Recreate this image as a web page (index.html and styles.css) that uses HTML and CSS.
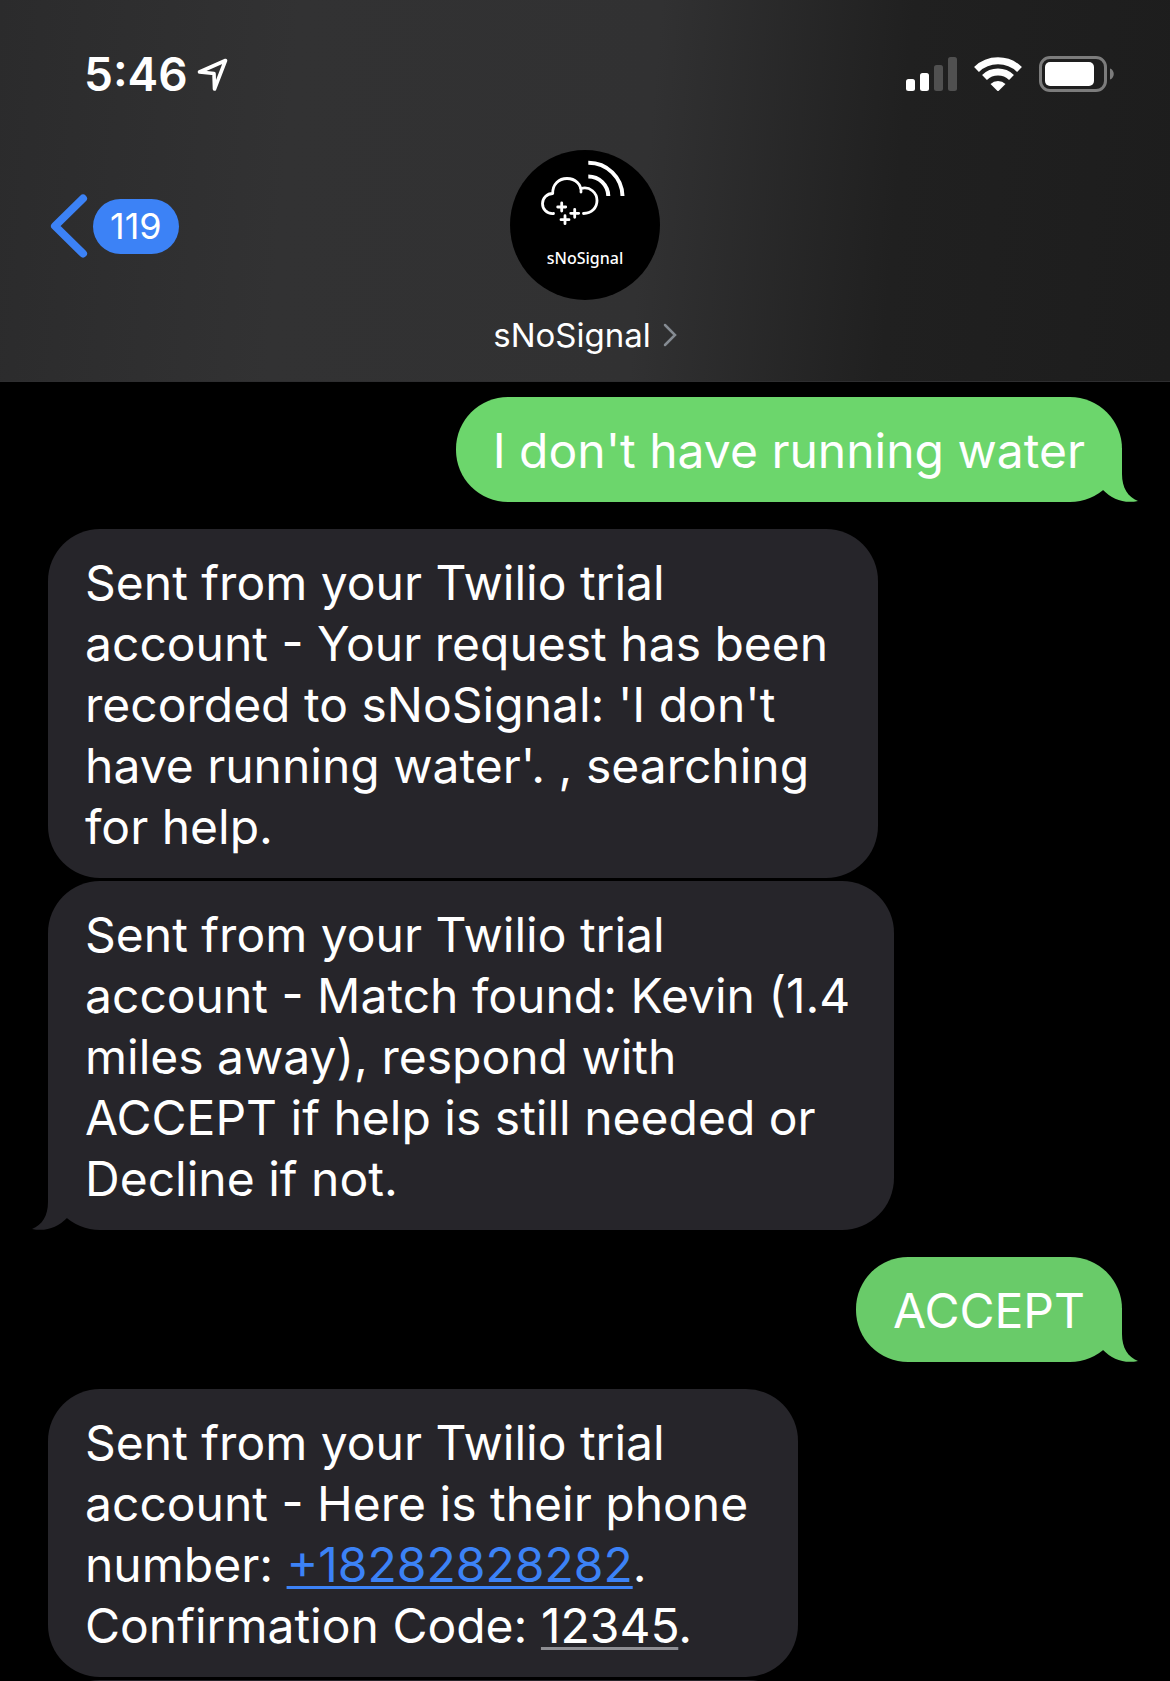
FILE: index.html
```html
<!DOCTYPE html>
<html lang="en">
<head>
    <meta charset="UTF-8">
    <meta name="viewport" content="width=device-width, initial-scale=1.0">
    <title>sNoSignal</title>
    <link rel="stylesheet" href="styles.css">
</head>
<body>
    <header class="header">
        <!-- Status bar -->
        <div class="status">
            <div class="clock">
                <span>5:46</span>
                <svg class="location" width="34" height="36" viewBox="0 0 34 36" aria-hidden="true">
                    <path d="M4.500 16 L30.500 4.500 L19.500 33 L19 17.500 Z" fill="none" stroke="#fff" stroke-width="3.600" stroke-linejoin="round"/>
                </svg>
            </div>
            <div class="indicators">
                <svg width="51" height="36" viewBox="0 0 51 36" aria-hidden="true">
                    <rect x="0" y="23" width="9" height="12" rx="2.500" fill="#fff"/>
                    <rect x="14" y="17" width="9" height="18" rx="2.500" fill="#fff"/>
                    <rect x="28" y="9" width="9" height="26" rx="2.500" fill="#505050"/>
                    <rect x="42" y="1" width="9" height="34" rx="2.500" fill="#505050"/>
                </svg>
                <svg width="50" height="36" viewBox="0 0 50 36" aria-hidden="true">
                    <path d="M3.500 13.500 A31 31 0 0 1 46.500 13.500" fill="none" stroke="#fff" stroke-width="7"/>
                    <path d="M11.500 21.500 A19.500 19.500 0 0 1 38.500 21.500" fill="none" stroke="#fff" stroke-width="7"/>
                    <path d="M17.500 28 A11 11 0 0 1 32.500 28 L26 34.500 Q25 35.500 24 34.500 Z" fill="#fff"/>
                </svg>
                <svg width="76" height="36" viewBox="0 0 76 36" aria-hidden="true">
                    <rect x="1.500" y="1.500" width="65" height="33" rx="9.500" fill="none" stroke="#7c7c7c" stroke-width="3"/>
                    <rect x="6" y="6" width="49" height="24" rx="5" fill="#fff"/>
                    <path d="M71 12.500 C76 14 76 22 71 23.500 Z" fill="#7c7c7c"/>
                </svg>
            </div>
        </div>

        <!-- Conversation bar -->
        <nav class="nav">
            <a class="back" href="#" aria-label="Back, 119 unread">
                <svg width="38" height="64" viewBox="0 0 38 64" aria-hidden="true">
                    <path d="M33 4.500 L5 32 L33 59.500" fill="none" stroke="#3c82f6" stroke-width="8" stroke-linecap="round" stroke-linejoin="round"/>
                </svg>
                <span class="unread">119</span>
            </a>
            <button class="contact" type="button">
                <span class="avatar">
                    <svg class="logo" width="150" height="80" viewBox="0 0 150 80" fill="none" stroke="#fff" aria-hidden="true">
                        <path d="M43.500 63.500 C36 64 32.500 58.500 32.500 53.500 C32.500 48 37 43.500 42.700 43.500 C42.500 34 49 28.500 57 28.500 C65.500 28.500 71.500 34.500 71 42" stroke-width="2.800" stroke-linecap="round" stroke-linejoin="round"/>
                        <path d="M71 38.500 C80 36 87 43 87 50.500 C87 58 81.500 63.500 73.500 63.500" stroke-width="2.800" stroke-linecap="round"/>
                        <path d="M78.300 12.700 A34 34 0 0 1 112.500 46 M78.300 26.500 A20 20 0 0 1 98.300 46" stroke-width="4"/>
                        <path d="M51.700 53 V61 M47.700 57 H55.700 M64.700 59.300 V67.300 M60.700 63.300 H68.700 M55 65.700 V73.700 M51 69.700 H59" stroke-width="2.800" stroke-linecap="round"/>
                    </svg>
                    <span class="logo-text">sNoSignal</span>
                </span>
                <span class="name">
                    sNoSignal
                    <svg width="14" height="24" viewBox="0 0 14 24" aria-hidden="true">
                        <path d="M2 2 L12 12 L2 22" fill="none" stroke="#858b92" stroke-width="2.500" stroke-linecap="round"/>
                    </svg>
                </span>
            </button>
        </nav>
    </header>

    <main class="thread">
        <div class="bubble sent">
            I don't have running water
            <svg class="tail" width="38" height="54" viewBox="0 0 38 54" aria-hidden="true">
                <path d="M22 0 V26 C22 40 28 49 38 53 C24 56 12 51 3 42 L0 38 V0 Z"/>
            </svg>
        </div>

        <div class="bubble received">
            Sent from your Twilio trial<br>
            account - Your request has been<br>
            recorded to sNoSignal: 'I don't<br>
            have running water'. , searching<br>
            for help.
        </div>
        <div class="bubble received follow">
            Sent from your Twilio trial<br>
            account - Match found: Kevin (1.4<br>
            miles away), respond with<br>
            ACCEPT if help is still needed or<br>
            Decline if not.
            <svg class="tail" width="38" height="54" viewBox="0 0 38 54" aria-hidden="true">
                <path d="M22 0 V26 C22 40 28 49 38 53 C24 56 12 51 3 42 L0 38 V0 Z"/>
            </svg>
        </div>

        <div class="bubble sent dim">
            ACCEPT
            <svg class="tail" width="38" height="54" viewBox="0 0 38 54" aria-hidden="true">
                <path d="M22 0 V26 C22 40 28 49 38 53 C24 56 12 51 3 42 L0 38 V0 Z"/>
            </svg>
        </div>

        <div class="bubble received">
            Sent from your Twilio trial<br>
            account - Here is their phone<br>
            number: <a class="phone" href="tel:+18282828282">+18282828282</a>.<br>
            Confirmation Code: <a class="code" href="#">12345</a>.
        </div>
        <!-- Next message, scrolled below the fold -->
        <div class="bubble received follow next"></div>
    </main>
</body>
</html>
```
FILE: styles.css
```css
* {
    box-sizing: border-box;
}

body {
    margin: 0;
    height: 100vh;
    display: flex;
    flex-direction: column;
    overflow: hidden;
    background: #000;
    color: #fff;
    font-family: Inter, "Liberation Sans", sans-serif;
}

svg {
    display: block;
    flex: none;
}

.header {
    flex: none;
    background: linear-gradient(95deg, #2b2b2c 0%, #323233 25%, #313132 55%, #202020 76%, #1d1d1d 100%);
    border-bottom: 1px solid #2e2e30;
}

/* Status bar */
.status {
    display: flex;
    justify-content: space-between;
    align-items: center;
    height: 148px;
    padding: 0 55px 0 84px;
}

.clock {
    display: flex;
    align-items: center;
    gap: 7px;
    font-size: 46px;
    font-weight: 600;
    line-height: 56px;
}

.indicators {
    display: flex;
    align-items: center;
    gap: 16px;
}

/* Conversation bar */
.nav {
    display: grid;
    grid-template-columns: 1fr auto 1fr;
    align-items: start;
    padding: 2px 50px 25px;
}

.back {
    display: flex;
    align-items: center;
    gap: 5px;
    height: 152px;
    color: #fff;
    text-decoration: none;
}

.unread {
    padding: 0 17px;
    border-radius: 28px;
    background: #3c82f6;
    font-size: 36px;
    line-height: 55px;
}

.contact {
    display: flex;
    flex-direction: column;
    align-items: center;
    gap: 14px;
    padding: 0;
    border: 0;
    background: none;
    color: #fff;
    font: inherit;
}

.avatar {
    display: flex;
    flex-direction: column;
    align-items: center;
    gap: 16px;
    width: 150px;
    height: 150px;
    border-radius: 50%;
    background: #000;
}

.logo-text {
    font-family: "Noto Sans", sans-serif;
    font-size: 16px;
    font-weight: 500;
    line-height: 24px;
}

.name {
    display: flex;
    align-items: center;
    gap: 12px;
    font-size: 33px;
    line-height: 42px;
}

/* Messages */
.thread {
    flex: 1;
    min-height: 0;
    display: flex;
    flex-direction: column;
    align-items: flex-start;
    gap: 27px;
    padding: 15px 48px 0;
    overflow: hidden;
}

.bubble {
    position: relative;
    flex: none;
    padding: 23px 37px 21px;
    border-radius: 52px;
    font-size: 48px;
    line-height: 61px;
    white-space: nowrap;
}

.sent {
    align-self: flex-end;
    background: #6cd66c;
    fill: #6cd66c;
}

.dim {
    background: #69cb69;
    fill: #69cb69;
}

.received {
    padding-right: 50px;
    background: #26252a;
    fill: #26252a;
}

.follow {
    margin-top: -24px;
    padding-right: 44px;
}

.next {
    width: 70%;
    height: 105px;
}

.tail {
    position: absolute;
    right: -16px;
    bottom: 0;
}

.received .tail {
    right: auto;
    left: -16px;
    transform: scaleX(-1);
}

.bubble a {
    color: inherit;
    text-decoration-thickness: 3px;
    text-underline-offset: 4px;
    text-decoration-skip-ink: none;
}

.bubble .phone {
    color: #3c82f6;
}

.bubble .code {
    text-decoration-color: #8e8e93;
}
```
